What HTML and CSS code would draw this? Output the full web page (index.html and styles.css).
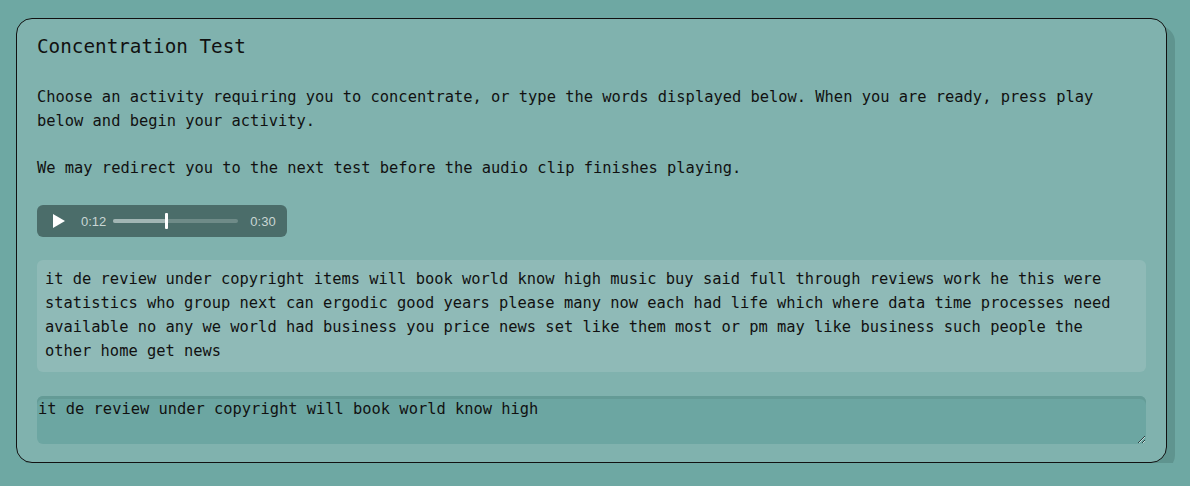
FILE: index.html
```html
<!DOCTYPE html>
<html>
<head>
<meta charset="utf-8">
<link rel="stylesheet" href="styles.css">
</head>
<body>
<div class="card">
  <h1 class="title">Concentration Test</h1>
  <p class="para p1">Choose an activity requiring you to concentrate, or type the words displayed below. When you are ready, press play below and begin your activity.</p>
  <p class="para p2">We may redirect you to the next test before the audio clip finishes playing.</p>
  <div class="player">
    <svg class="play" width="14" height="16" viewBox="0 0 14 16"><path d="M1 1 L13 8 L1 15 Z" fill="#fff"/></svg>
    <span class="time">0:12</span>
    <div class="track">
      <div class="fill" style="width:53px"></div>
      <div class="thumb"></div>
    </div>
    <span class="time">0:30</span>
  </div>
  <div class="words">it de review under copyright items will book world know high music buy said full through reviews work he this were statistics who group next can ergodic good years please many now each had life which where data time processes need available no any we world had business you price news set like them most or pm may like business such people the other home get news</div>
  <textarea class="typing">it de review under copyright will book world know high</textarea>
</div>
</body>
</html>
```

FILE: styles.css
```css
html, body {
  margin: 0;
  padding: 0;
  background: #6ea8a3;
}
body {
  padding: 18px 23px 0 16px;
  font-family: "DejaVu Sans Mono", monospace;
  color: #111;
}
.card {
  background: #80b2ae;
  border: 1px solid #111;
  border-radius: 16px;
  box-shadow: 8px 8px 0 #5f948f;
  padding: 16px 20px 18px 20px;
  display: flex;
  flex-direction: column;
}
.title {
  margin: 0;
  font-weight: normal;
  font-size: 19.3px;
  line-height: 24px;
}
.para {
  margin: 0;
  font-size: 15.4px;
  line-height: 24px;
}
.p1 { margin-top: 26px; }
.p2 { margin-top: 23px; }
.player {
  margin-top: 25px;
  width: 250px;
  height: 32px;
  box-sizing: border-box;
  background: #4b6d6a;
  border-radius: 6px;
  display: flex;
  align-items: center;
  padding: 0 0 0 15px;
  gap: 7px;
  font-family: "Liberation Sans", Arial, sans-serif;
  font-size: 13px;
  color: #c9d6d4;
}
.play {
  margin-right: 8px;
}
.track {
  position: relative;
  width: 125px;
  height: 4px;
  border-radius: 2px;
  background: #6f8b88;
  margin-right: 5px;
}
.fill {
  height: 4px;
  border-radius: 2px;
  background: #a2b6b4;
}
.thumb {
  position: absolute;
  left: 52px;
  top: -6px;
  width: 3px;
  height: 16px;
  border-radius: 1px;
  background: #fff;
}
.words {
  margin-top: 23px;
  background: #8fbab7;
  border-radius: 6px;
  padding: 7px 9px 9px 8px;
  font-size: 15.4px;
  line-height: 24px;
}
.typing {
  margin-top: 24px;
  height: 48px;
  box-sizing: border-box;
  background: #6ca6a2;
  border: none;
  border-radius: 6px;
  box-shadow: inset 0 3px 0 #649b96;
  padding: 3px 0 0 1px;
  font-family: "DejaVu Sans Mono", monospace;
  font-size: 15.4px;
  line-height: 20px;
  color: #111;
  resize: vertical;
  outline: none;
}
```
